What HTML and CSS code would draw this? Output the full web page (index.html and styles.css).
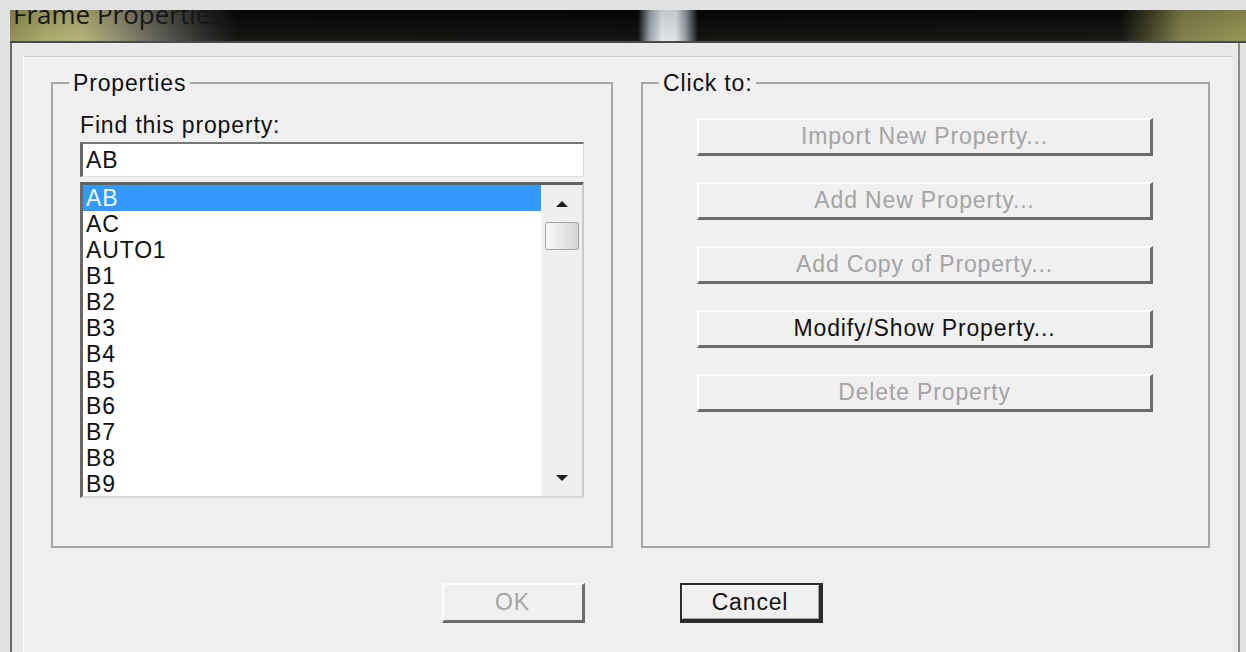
FILE: index.html
```html
<!DOCTYPE html>
<html lang="en">
<head>
<meta charset="utf-8">
<title>Frame Properties</title>
<link rel="stylesheet" href="styles.css">
</head>
<body>
<div class="screen">
  <div class="titlebar"><span class="title">Frame Properties</span></div>
  <div class="window">
    <div class="client">
      <div class="groups">
        <fieldset class="group group-props">
          <legend>Properties</legend>
          <div class="group-body props-body">
            <label class="find-label" for="find">Find this property:</label>
            <input class="find-input" id="find" type="text" value="AB">
            <div class="listbox">
              <ul class="items">
                <li class="selected">AB</li>
                <li>AC</li>
                <li>AUTO1</li>
                <li>B1</li>
                <li>B2</li>
                <li>B3</li>
                <li>B4</li>
                <li>B5</li>
                <li>B6</li>
                <li>B7</li>
                <li>B8</li>
                <li>B9</li>
              </ul>
              <div class="scrollbar">
                <div class="sb-btn"><svg width="12" height="6" viewBox="0 0 12 6"><path d="M0 6 L6 0 L12 6 Z" fill="#1e1e1e"/></svg></div>
                <div class="sb-thumb"></div>
                <div class="sb-track"></div>
                <div class="sb-btn"><svg width="12" height="6" viewBox="0 0 12 6"><path d="M0 0 L12 0 L6 6 Z" fill="#1e1e1e"/></svg></div>
              </div>
            </div>
          </div>
        </fieldset>
        <fieldset class="group group-actions">
          <legend>Click to:</legend>
          <div class="group-body actions-body">
            <button class="btn" disabled>Import New Property...</button>
            <button class="btn" disabled>Add New Property...</button>
            <button class="btn" disabled>Add Copy of Property...</button>
            <button class="btn">Modify/Show Property...</button>
            <button class="btn" disabled>Delete Property</button>
          </div>
        </fieldset>
      </div>
      <div class="footer">
        <button class="btn btn-ok" disabled>OK</button>
        <button class="btn btn-default">Cancel</button>
      </div>
    </div>
  </div>
</div>
</body>
</html>
```

FILE: styles.css
```css
html, body {
  margin: 0;
  height: 100%;
}

body {
  background: #e2e2e2;
  font-family: "Liberation Sans", Arial, sans-serif;
  font-size: 23px;
  letter-spacing: 0.85px;
  color: #101010;
  overflow: hidden;
}

.screen {
  box-sizing: border-box;
  height: 652px;
  padding: 10px 0 0 10px;
  display: flex;
  flex-direction: column;
}

/* Aero caption strip with the desktop showing through */
.titlebar {
  height: 31px;
  flex: 0 0 auto;
  overflow: hidden;
  border-bottom: 2px solid #4a4a4a;
  background:
    linear-gradient(to bottom, rgba(0, 0, 0, 0.12), rgba(255, 255, 210, 0.06)),
    linear-gradient(to right,
      #8e8b50 0px, #a8a566 35px, #b3af74 70px, #8f8d6c 105px,
      #5c5b53 145px, #222 195px, #080808 228px,
      #060606 628px, #9aa3ad 640px, #e1e5eb 652px, #dde2e8 666px,
      #8d949c 676px, #070707 688px,
      #0a0a0a 1110px, #3a3a22 1138px, #7d7c48 1172px, #93914f 1236px);
}

.title {
  display: block;
  margin-top: -9px;
  padding-left: 3px;
  font-family: "Open Sans", "Liberation Sans", sans-serif;
  font-size: 26px;
  line-height: 26px;
  letter-spacing: 0;
  color: #171717;
  white-space: nowrap;
}

/* window frame around the client area */
.window {
  flex: 1;
  width: 1230px;
  box-sizing: border-box;
  border-left: 2px solid #6c6c6c;
  border-right: 2px solid #8c8c8c;
  background: #e9e9e9;
  padding: 13px 5px 0 11px;
  display: flex;
}

.client {
  flex: 1;
  background: #f0f0f0;
  border-top: 1px solid #cdcdcd;
  border-left: 1px solid #fbfbfb;
  padding: 13px 23px 0 27px;
}

.groups {
  display: flex;
  gap: 28px;
}

.group {
  margin: 0;
  padding: 0;
  min-width: 0;
  border: 2px solid #a6a6a6;
}

.group-props {
  flex: 0 0 562px;
  box-sizing: border-box;
}

.group-actions {
  flex: 1;
}

.group legend {
  margin-left: 16px;
  padding: 0 4px;
  line-height: 26px;
}

.props-body {
  padding: 16px 27px 48px 27px;
  display: flex;
  flex-direction: column;
}

.find-label {
  display: block;
  line-height: 26px;
}

.find-input {
  margin: 4px 0 0;
  height: 35px;
  box-sizing: border-box;
  border-style: solid;
  border-width: 2px 1px 1px 3px;
  border-color: #777 #d9d9d9 #e2e2e2 #6a6a6a;
  padding: 0 3px;
  background: #fff;
  font: inherit;
  letter-spacing: inherit;
  color: #101010;
  outline: none;
}

.listbox {
  margin-top: 5px;
  height: 316px;
  box-sizing: border-box;
  border-style: solid;
  border-width: 3px 2px 2px 3px;
  border-color: #626262 #cbcbcb #d8d8d8 #6a6a6a;
  background: #fff;
  display: flex;
}

.items {
  list-style: none;
  margin: 0;
  padding: 0;
  flex: 1;
  overflow: hidden;
}

.items li {
  height: 26px;
  line-height: 26px;
  padding-left: 3px;
}

.items li.selected {
  background: #3399ff;
  color: #eef8ff;
}

.scrollbar {
  width: 40px;
  flex: 0 0 auto;
  background: #efefef;
  border-left: 1px solid #f8f8f8;
  display: flex;
  flex-direction: column;
}

.sb-btn {
  height: 37px;
  display: flex;
  align-items: center;
  justify-content: center;
}

.sb-thumb {
  height: 28px;
  margin: 0 3px;
  box-sizing: border-box;
  border: 1px solid #a3a3a3;
  border-radius: 2px;
  background: linear-gradient(to right, #fbfbfb, #d4d4d4);
}

.sb-track {
  flex: 1;
}

.actions-body {
  padding: 22px 55px 0 54px;
  display: flex;
  flex-direction: column;
  gap: 26px;
}

/* classic raised push button */
.btn {
  height: 38px;
  box-sizing: border-box;
  border-style: solid;
  border-width: 2px 3px 3px 2px;
  border-color: #fcfcfc #6b6b6b #6b6b6b #fcfcfc;
  background: #f0f0f0;
  font: inherit;
  letter-spacing: inherit;
  color: #111;
  padding: 0;
}

.btn:disabled {
  color: #a4a4a4;
}

.footer {
  display: flex;
  justify-content: center;
  gap: 95px;
  margin-top: 35px;
  padding-left: 3px;
}

.btn-ok,
.btn-default {
  width: 143px;
  height: 40px;
}

.btn-default {
  border: 2px solid #2c2c2c;
  border-right-width: 4px;
  border-bottom-width: 4px;
  box-shadow: inset 1px 1px 0 #fff, inset -1px -1px 0 #a0a0a0;
}
```
